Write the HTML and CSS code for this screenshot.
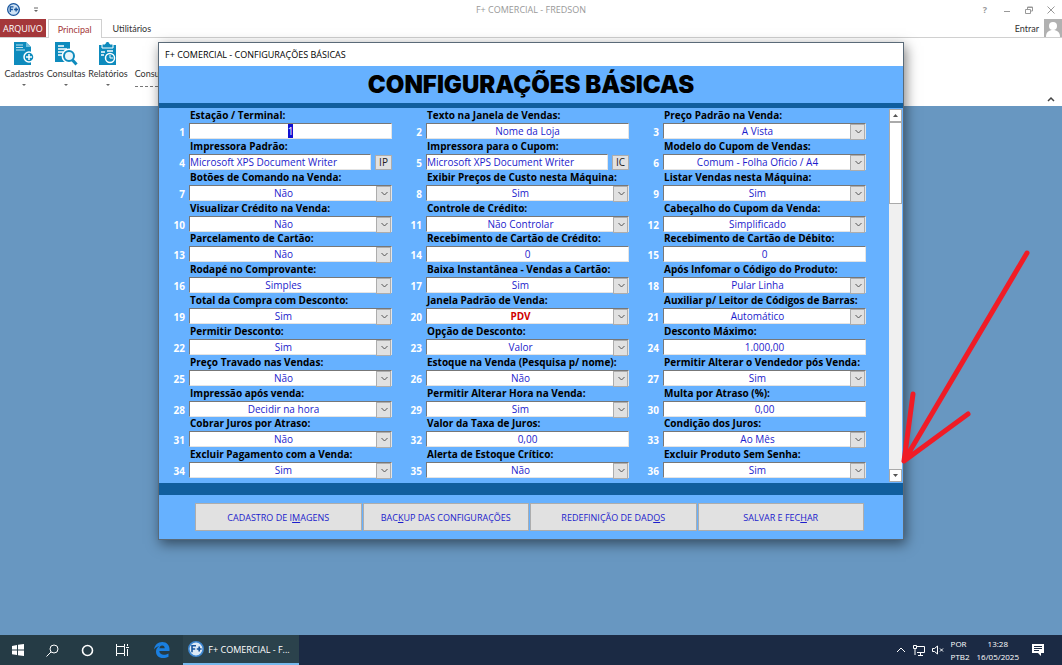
FILE: index.html
```html
<!DOCTYPE html>
<html lang="pt-BR">
<head>
  <meta charset="UTF-8">
  <meta name="viewport" content="width=device-width, initial-scale=1.0">
  <title>F+ COMERCIAL - FREDSON</title>
  <link rel="stylesheet" href="styles.css">
</head>
<body>
  <header class="titlebar">
    <div class="quick">
      <svg class="logo" width="13" height="13" viewBox="0 0 20 20"><circle cx="10" cy="10" r="9" fill="#cfe3f5" stroke="#17549c" stroke-width="2"/><path d="M5 14V6h5M5 10h4M11 10h6M14 7v6" fill="none" stroke="#17549c" stroke-width="2"/></svg>
      <svg width="6" height="6" viewBox="0 0 6 6"><path d="M1 1h4" stroke="#666"/><path d="M1 3h4L3 5z" fill="#666"/></svg>
    </div>
    <span class="app-title">F+ COMERCIAL - FREDSON</span>
    <div class="window-buttons">
      <button type="button" aria-label="Ajuda">?</button>
      <button type="button" aria-label="Minimizar"><svg width="8" height="8" viewBox="0 0 8 8"><path d="M1 5.500h6"/></svg></button>
      <button type="button" aria-label="Restaurar"><svg width="8" height="8" viewBox="0 0 8 8"><path d="M.5 3.500h5v4h-5zM2.500 3V1h5v4H6M2.500 1.500h5"/></svg></button>
      <button type="button" aria-label="Fechar"><svg width="8" height="8" viewBox="0 0 8 8"><path d="M.5.5l7 7M7.500.5l-7 7"/></svg></button>
    </div>
  </header>

  <nav class="tabs">
    <a class="tab file" href="#">ARQUIVO</a>
    <a class="tab active" href="#">Principal</a>
    <a class="tab" href="#">Utilitários</a>
    <div class="account">
      <a href="#">Entrar</a>
      <svg width="18" height="18" viewBox="0 0 18 18"><path d="M0 0h18v18H0z" fill="#b1b1b1"/><circle cx="9" cy="7" r="4" fill="#fff"/><path d="M2 18c0-5 3-7 7-7s7 2 7 7z" fill="#fff"/></svg>
    </div>
  </nav>

  <div class="ribbon">
    <button type="button" class="ribbon-item">
      <svg width="22" height="24" viewBox="0 0 22 24"><path d="M1 0h12l5 5v18H1z" fill="#0e8bbd"/><path d="M13 0v5h5" fill="#6fc0df"/><path d="M3 3h7M3 5.500h7M3 8h9" stroke="#bfe3f1"/><circle cx="16" cy="15" r="5" fill="#0e8bbd" stroke="#fff" stroke-width="1.500"/><path d="M13 15h6M16 12v6" stroke="#fff" stroke-width="1.500"/></svg>
      <span>Cadastros</span>
      <i class="caret"></i>
    </button>
    <button type="button" class="ribbon-item">
      <svg width="24" height="24" viewBox="0 0 24 24"><path d="M1 0h15v20H1z" fill="#0e8bbd"/><path d="M4 4h6M4 7h9M4 10h5M4 13h5" stroke="#fff" stroke-width="1.500"/><circle cx="15" cy="14" r="5" fill="#d9eef7" stroke="#fff" stroke-width="5"/><circle cx="15" cy="14" r="5" fill="#e8f5fa" stroke="#0e8bbd" stroke-width="2"/><path d="M18.500 18l4 4.500" stroke="#0e8bbd" stroke-width="3"/></svg>
      <span>Consultas</span>
      <i class="caret"></i>
    </button>
    <button type="button" class="ribbon-item">
      <svg width="20" height="24" viewBox="0 0 20 24"><path d="M1 3h17v20H1z" fill="#0e8bbd"/><path d="M4 2h3a2.500 2.500 0 0 1 5 0h3v4H4z" fill="#0e8bbd" stroke="#fff"/><path d="M3 10h4M3 13h3M9 9h6" stroke="#fff" stroke-width="1.500"/><circle cx="12" cy="16" r="4.500" fill="#0e8bbd" stroke="#fff" stroke-width="1.500"/><path d="M12 13v3h3" stroke="#fff" fill="none"/></svg>
      <span>Relatórios</span>
      <i class="caret"></i>
    </button>
    <div class="ribbon-item queries"><span>Consultas</span></div>
    <div class="ribbon-tops">
      <svg width="504" height="4" viewBox="0 0 504 4"><path d="M0 0h23v4H0zM112 0h10v4h-10zM242 0h6v4h-6zM359 0h7v4h-7zM452 0h5v4h-5zM497 0h6v4h-6z" fill="#6bafc9"/><path d="M64 0h3v4h-3zM71 0h3v4h-3zM163 0h3v4h-3zM169 0h16v4h-16zM404 0h4v4h-4z" fill="#2e6dae"/></svg>
    </div>
    <button type="button" class="collapse" aria-label="Recolher"><svg width="8" height="6" viewBox="0 0 8 6"><path d="M1 5l3-3 3 3" fill="none" stroke="#444" stroke-width="1.500"/></svg></button>
  </div>

  <main class="desktop"></main>

  <div class="overlay">
    <section class="dialog" role="dialog" aria-labelledby="dialog-title">
      <div class="dialog-bar">F+ COMERCIAL - CONFIGURAÇÕES BÁSICAS</div>
      <h1 id="dialog-title">CONFIGURAÇÕES BÁSICAS</h1>
      <div class="dialog-body">
        <form id="settings" class="settings"></form>
        <div class="scrollbar">
          <button type="button" aria-label="Para cima"><svg width="5" height="3" viewBox="0 0 7 4"><path d="M0 4l3.500-4L7 4z" fill="#555"/></svg></button>
          <div class="thumb"></div>
          <button type="button" class="down" aria-label="Para baixo"><svg width="5" height="3" viewBox="0 0 7 4"><path d="M0 0l3.500 4L7 0z" fill="#555"/></svg></button>
        </div>
      </div>
      <div class="dialog-footer">
        <button type="button">CADASTRO DE I<u>M</u>AGENS</button>
        <button type="button">BAC<u>K</u>UP DAS CONFIGURAÇÕES</button>
        <button type="button">REDEFINIÇÃO DE DAD<u>O</u>S</button>
        <button type="button">SALVAR E FEC<u>H</u>AR</button>
      </div>
      <svg class="arrow" width="140" height="220" viewBox="0 0 140 220"><path d="M128 5L5 213M14 146L5 213L69 166" fill="none" stroke="#f01c26" stroke-width="5" stroke-linecap="round" stroke-linejoin="round"/></svg>
    </section>
  </div>

  <footer class="taskbar">
    <button type="button" aria-label="Iniciar"><svg width="12" height="12" viewBox="0 0 12 12"><path d="M0 2l5-1v4.500H0zM6 .8L12 0v5.500H6zM0 6.500h5V11l-5-.8zM6 6.500h6V12l-6-.8z" fill="#fff"/></svg></button>
    <button type="button" aria-label="Pesquisar"><svg width="13" height="13" viewBox="0 0 13 13"><circle cx="8" cy="5" r="4" fill="none" stroke="#fff"/><path d="M5 8l-4.500 4.500" stroke="#fff"/></svg></button>
    <button type="button" aria-label="Cortana"><svg width="13" height="13" viewBox="0 0 13 13"><circle cx="6.500" cy="6.500" r="5" fill="none" stroke="#fff" stroke-width="1.600"/></svg></button>
    <button type="button" aria-label="Visão de tarefas"><svg width="13" height="12" viewBox="0 0 13 12"><path d="M.5 0v2.500h8V0M.5 12V9.500h8V12M.5 2.500v7M8.500 2.500v7M11.500 0v2M11.500 5v7M10 3.500h3" fill="none" stroke="#fff"/></svg></button>
    <button type="button" class="edge" aria-label="Edge"><svg width="16" height="16" viewBox="0 0 16 16"><path d="M0 7.500C.6 3 3.800 0 8.200 0 13 0 15.500 3.500 15.500 7v2H5.300c.2 2.600 2.200 3.700 4.500 3.700 1.700 0 3.400-.5 4.700-1.300v3.300c-1.500.9-3.400 1.300-5.500 1.300-4.300 0-7-2.600-7-6.500C2 6.800 3.300 5 5.500 3.900 3.300 4.300 1.200 5.500 0 7.500zM5.400 6.300h5.300C10.700 4.500 9.800 3.400 8.200 3.400S5.700 4.700 5.400 6.300z" fill="#1a7fe0"/></svg></button>
    <button type="button" class="task">
      <svg width="16" height="16" viewBox="0 0 20 20"><circle cx="10" cy="10" r="9" fill="#dce9f6" stroke="#3d86d0" stroke-width="2"/><path d="M5 14V6h5M5 10h4M11 10h6M14 7v6" fill="none" stroke="#17549c" stroke-width="2"/></svg>
      <span>F+ COMERCIAL - F...</span>
    </button>
    <div class="tray">
      <svg width="10" height="6" viewBox="0 0 10 6"><path d="M1 5l4-4 4 4" fill="none" stroke="#fff"/></svg>
      <svg width="12" height="11" viewBox="0 0 12 11"><path d="M3 1.500h8.500v6H4M7.500 7.500V10M5 10.500h5M.5.5h3v3h-3zM2 3.500V10" fill="none" stroke="#fff"/></svg>
      <svg width="12" height="10" viewBox="0 0 12 10"><path d="M.5 3.500h2L5.500 1v8l-3-2.500h-2zM8 3.500l3 3M11 3.500l-3 3" fill="none" stroke="#fff"/></svg>
      <div class="tray-text"><span>POR</span><span>PTB2</span></div>
      <div class="tray-text clock"><span>13:28</span><span>16/05/2025</span></div>
      <svg class="note" width="12" height="12" viewBox="0 0 12 12"><path d="M0 0h12v9H9v3L6 9H0z" fill="#fff"/><path d="M2 2.500h8M2 4.500h8M2 6.500h5" stroke="#1b2a44"/></svg>
    </div>
  </footer>

  <script src="script.js"></script>
</body>
</html>
```
FILE: styles.css
```css
* {
  box-sizing: border-box;
}

body {
  margin: 0;
  min-height: 100vh;
  display: flex;
  flex-direction: column;
  position: relative;
  overflow: hidden;
  font-family: "Open Sans", sans-serif;
  font-size: 9px;
  color: #333;
  background-color: #6897c1;
}

button {
  font: inherit;
  color: inherit;
  padding: 0;
  border: none;
  background: none;
}

a {
  color: inherit;
  text-decoration: none;
}

svg {
  display: block;
}

/* application window */
.titlebar {
  display: grid;
  grid-template-columns: 1fr auto 1fr;
  align-items: center;
  height: 19px;
  background-color: #fff;
}

.quick {
  display: flex;
  align-items: center;
  gap: 13px;
  padding-left: 7px;
}

.app-title {
  color: #999;
}

.window-buttons {
  display: flex;
  justify-content: flex-end;
  gap: 14px;
  padding-right: 7px;
}

.window-buttons button {
  width: 8px;
  color: #999;
  font-weight: bold;
}

.window-buttons svg {
  fill: none;
  stroke: #999;
}

.tabs {
  display: flex;
  height: 19px;
  background-color: #fff;
  border-bottom: 1px solid #d0d0d0;
  font-family: Lato, sans-serif;
}

.tab {
  padding: 0 11px;
  line-height: 19px;
}

.tab.file {
  padding: 0 3px;
  margin-right: 2px;
  font-family: "Open Sans", sans-serif;
  color: #fff;
  background-color: #a4373a;
}

.tab.active {
  height: 19px;
  padding: 0 9px;
  color: #a4373a;
  background-color: #fff;
  border: 1px solid #d0d0d0;
  border-bottom: none;
}

.account {
  display: flex;
  align-items: center;
  gap: 5px;
  margin-left: auto;
}

.ribbon {
  position: relative;
  display: flex;
  height: 68px;
  padding: 4px 3px;
  background-color: #fff;
  font-family: Lato, sans-serif;
}

.ribbon-item {
  display: flex;
  flex-direction: column;
  align-items: center;
  width: 42px;
  line-height: 14px;
}

.ribbon-item svg {
  margin-bottom: 1px;
}

.queries {
  margin-left: 4px;
  padding-top: 25px;
}

.queries span {
  border-bottom: 1px dashed #777;
  padding-bottom: 5px;
}

.caret {
  margin-top: 3px;
  border: 2px solid transparent;
  border-top-color: #666;
}

.ribbon-tops {
  margin-left: -14px;
}

.collapse {
  align-self: flex-end;
  margin-left: auto;
  padding-right: 4px;
}

.desktop {
  flex: 1;
}

/* settings window */
.overlay {
  position: absolute;
  top: 42px;
  left: 0;
  right: 0;
  display: flex;
  justify-content: center;
}

.dialog {
  position: relative;
  width: 90%;
  max-width: 746px;
  border: 1px solid #5a6a78;
  background-color: #66b1ff;
  box-shadow: 2px 4px 12px rgba(0, 0, 0, 0.5);
}

.dialog-bar {
  height: 23px;
  padding-left: 6px;
  line-height: 23px;
  color: #000;
  background-color: #fff;
}

h1 {
  margin: 0;
  font: 900 24px/37px Inter, sans-serif;
  text-align: center;
  color: #000;
}

.dialog-body {
  display: flex;
  height: 392px;
  border-top: 5px solid #105e9e;
  border-bottom: 12px solid #105e9e;
}

.settings {
  flex: 1;
  display: grid;
  grid-template-columns: repeat(3, 1fr);
  grid-template-rows: repeat(12, minmax(0, 1fr));
  column-gap: 4px;
  height: 370px;
  padding-right: 23px;
  font-family: "Open Sans", sans-serif;
  font-size: 10px;
}

.field {
  display: grid;
  grid-template-columns: 30px 1fr;
  grid-template-rows: 15px 16px;
}

.field label {
  grid-column: 2;
  padding-left: 1px;
  line-height: 14px;
  font-weight: bold;
  color: #000;
  white-space: nowrap;
}

.number {
  padding-right: 4px;
  line-height: 18px;
  font-weight: bold;
  text-align: right;
  color: #fff;
}

.control {
  position: relative;
  display: flex;
  gap: 4px;
}

.control input,
.control select {
  flex: 1;
  min-width: 0;
  height: 16px;
  margin: 0;
  padding: 0;
  font: inherit;
  text-align: center;
  text-align-last: center;
  color: #1c1ccc;
  background-color: #fff;
  border: 1px solid #e4e4e4;
  border-top-color: #777;
  border-left-color: #777;
  border-radius: 0;
  outline: none;
  appearance: none;
}

.control select {
  padding-right: 14px;
}

.control.drop::after {
  content: "";
  position: absolute;
  top: 1px;
  right: 1px;
  width: 13px;
  height: 14px;
  border: 1px solid #adadad;
  background: #e1e1e1;
}

.control .chevron {
  position: absolute;
  top: 6px;
  right: 4px;
  z-index: 1;
  pointer-events: none;
}

.control input::selection {
  color: #fff;
  background-color: #1010d0;
}

.control.printer input {
  text-align: left;
  text-align-last: left;
}

.control.printer button {
  width: 17px;
  height: 15px;
  margin-top: 1px;
  line-height: 13px;
  color: #222;
  background-color: #e1e1e1;
  border: 1px solid #adadad;
}

.control .alert {
  color: #d00000;
  font-weight: bold;
}

.scrollbar {
  display: flex;
  flex-direction: column;
  width: 13px;
  margin-right: 1px;
  margin-top: 1px;
  height: 373px;
  background-color: #f0f0f0;
}

.scrollbar button {
  display: flex;
  align-items: center;
  justify-content: center;
  height: 13px;
  background-color: #fff;
  border: 1px solid #aaa;
}

.scrollbar .down {
  margin-top: auto;
}

.thumb {
  height: 82px;
  background-color: #fff;
  border: 1px solid #aaa;
}

.dialog-footer {
  display: grid;
  grid-template-columns: repeat(4, 1fr);
  gap: 1px;
  padding: 8px 39px 8px 36px;
}

.dialog-footer button {
  height: 28px;
  color: #1c1ccc;
  background-color: #e1e1e1;
  border: 1px solid #adadad;
}

.arrow {
  position: absolute;
  top: 205px;
  right: -136px;
  pointer-events: none;
}

/* taskbar */
.taskbar {
  display: flex;
  align-items: stretch;
  height: 30px;
  color: #fff;
  background: linear-gradient(90deg, #253b45 0, #253b45 298px, #1b2a44 299px);
}

.taskbar > button {
  display: flex;
  align-items: center;
  justify-content: center;
  width: 35px;
}

.taskbar .edge {
  width: 43px;
}

.taskbar .task {
  width: 116px;
  gap: 4px;
  padding-right: 4px;
  background-color: #2b424c;
  border-bottom: 2px solid #76b9ed;
}

.tray {
  display: flex;
  align-items: center;
  gap: 7px;
  margin-left: auto;
  padding-right: 18px;
}

.tray-text {
  display: flex;
  flex-direction: column;
  font-size: 8px;
  line-height: 13px;
}

.clock {
  text-align: center;
}

.note {
  margin-left: 6px;
}
```
FILE: script.js
```javascript
// kind: s = list, t = text, p = printer with button
const fields = [
  ['Estação / Terminal:', 't', '1'],
  ['Texto na Janela de Vendas:', 't', 'Nome da Loja'],
  ['Preço Padrão na Venda:', 's', 'A Vista'],
  ['Impressora Padrão:', 'p', 'Microsoft XPS Document Writer', 'IP'],
  ['Impressora para o Cupom:', 'p', 'Microsoft XPS Document Writer', 'IC'],
  ['Modelo do Cupom de Vendas:', 's', 'Comum - Folha Oficio / A4'],
  ['Botões de Comando na Venda:', 's', 'Não'],
  ['Exibir Preços de Custo nesta Máquina:', 's', 'Sim'],
  ['Listar Vendas nesta Máquina:', 's', 'Sim'],
  ['Visualizar Crédito na Venda:', 's', 'Não'],
  ['Controle de Crédito:', 's', 'Não Controlar'],
  ['Cabeçalho do Cupom da Venda:', 's', 'Simplificado'],
  ['Parcelamento de Cartão:', 's', 'Não'],
  ['Recebimento de Cartão de Crédito:', 't', '0'],
  ['Recebimento de Cartão de Débito:', 't', '0'],
  ['Rodapé no Comprovante:', 's', 'Simples'],
  ['Baixa Instantânea - Vendas a Cartão:', 's', 'Sim'],
  ['Após Infomar o Código do Produto:', 's', 'Pular Linha'],
  ['Total da Compra com Desconto:', 's', 'Sim'],
  ['Janela Padrão de Venda:', 's', 'PDV'],
  ['Auxiliar p/ Leitor de Códigos de Barras:', 's', 'Automático'],
  ['Permitir Desconto:', 's', 'Sim'],
  ['Opção de Desconto:', 's', 'Valor'],
  ['Desconto Máximo:', 't', '1.000,00'],
  ['Preço Travado nas Vendas:', 's', 'Não'],
  ['Estoque na Venda (Pesquisa p/ nome):', 's', 'Não'],
  ['Permitir Alterar o Vendedor pós Venda:', 's', 'Sim'],
  ['Impressão após venda:', 's', 'Decidir na hora'],
  ['Permitir Alterar Hora na Venda:', 's', 'Sim'],
  ['Multa por Atraso (%):', 't', '0,00'],
  ['Cobrar Juros por Atraso:', 's', 'Não'],
  ['Valor da Taxa de Juros:', 't', '0,00'],
  ['Condição dos Juros:', 's', 'Ao Mês'],
  ['Excluir Pagamento com a Venda:', 's', 'Sim'],
  ['Alerta de Estoque Crítico:', 's', 'Não'],
  ['Excluir Produto Sem Senha:', 's', 'Sim']
];

const chevron = '<svg class="chevron" width="7" height="5" viewBox="0 0 7 5"><path d="M.5 1l3 3 3-3" fill="none" stroke="#555"/></svg>';

document.getElementById('settings').innerHTML = fields.map(function([label, kind, value, button], i) {
  const id = 'field' + (i + 1);
  let control;
  if (kind === 's') {
    const alert = value === 'PDV' ? ' class="alert"' : '';
    control = `<div class="control drop"><select id="${id}"${alert}><option>${value}</option></select>${chevron}</div>`;
  } else if (kind === 'p') {
    control = `<div class="control printer"><input type="text" id="${id}" value="${value}"><button type="button">${button}</button></div>`;
  } else {
    control = `<div class="control"><input type="text" id="${id}" value="${value}"></div>`;
  }
  return `<div class="field"><label for="${id}">${label}</label><span class="number">${i + 1}</span>${control}</div>`;
}).join('');

const first = document.getElementById('field1');
first.focus();
first.select();
```
